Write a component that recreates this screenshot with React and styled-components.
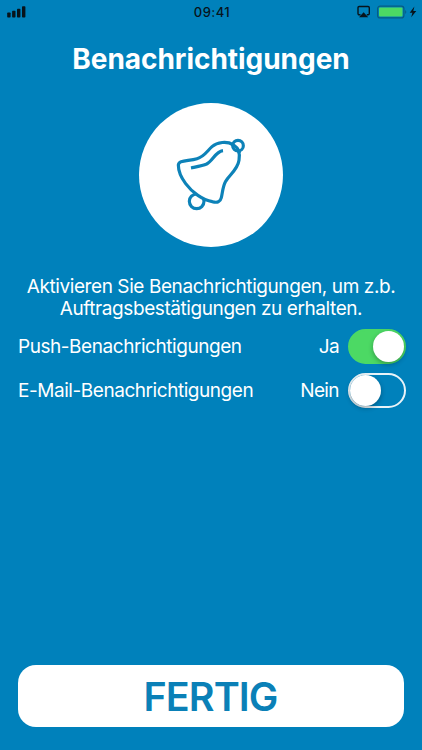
import React, { useState } from 'react';
import styled, { createGlobalStyle } from 'styled-components';

const GlobalStyle = createGlobalStyle`
    body {
        margin: 0;
        background: #0081bb;
        font-family: Inter, "Liberation Sans", sans-serif;
    }

    * {
        box-sizing: border-box;
    }
`

const StyledScreen = styled.div`
    display: flex;
    flex-direction: column;
    width: 100%;
    height: 100vh;
    min-height: 750px;
    padding-bottom: 23px;
    background: #0081bb;
    color: white;
`

const StatusBar = styled.header`
    display: grid;
    grid-template-columns: 1fr auto 1fr;
    align-items: center;
    height: 24px;
    padding: 0 5px 0 7px;
    color: #07141c;

    svg {
        display: block;
    }
`

const Time = styled.span`
    font-size: 13px;
    font-weight: 500;
    line-height: 24px;
    letter-spacing: 0.45px;
`

const StatusRight = styled.div`
    display: flex;
    justify-content: flex-end;
`

const Title = styled.h1`
    margin: 18px 0 0;
    font-size: 28px;
    font-weight: 700;
    line-height: 34px;
    letter-spacing: -0.04px;
    text-align: center;
`

const BellCircle = styled.div`
    display: flex;
    align-items: center;
    justify-content: center;
    align-self: center;
    width: 144px;
    height: 144px;
    margin-top: 27px;
    border-radius: 50%;
    background: white;
`

const Description = styled.p`
    margin: 29px 0 4px;
    padding: 0 20px;
    font-size: 19px;
    line-height: 22px;
    letter-spacing: -0.42px;
    text-align: center;
`

const Row = styled.div`
    display: flex;
    align-items: center;
    height: 44px;
    padding: 0 16px 0 18px;
    font-size: 19px;
    line-height: 24px;
    letter-spacing: -0.45px;
`

const Label = styled.span`
    flex: 1;
    padding-top: 2px;
`

const Value = styled.span`
    padding-top: 2px;
    letter-spacing: -0.6px;
`

const Switch = styled.button`
    display: flex;
    align-items: center;
    justify-content: ${props => props.$on ? 'flex-end' : 'flex-start'};
    width: 58px;
    height: 35px;
    margin-left: 9px;
    padding: 0;
    border: 2px solid ${props => props.$on ? '#4cd964' : '#e9f3f8'};
    border-radius: 18px;
    background: ${props => props.$on ? '#4cd964' : 'transparent'};
`

const Knob = styled.span`
    width: 31px;
    height: 31px;
    border-radius: 50%;
    background: white;
    box-shadow: 0 2px 5px rgba(0, 0, 0, 0.3);
`

const DoneButton = styled.button`
    height: 62px;
    margin: auto 18px 0;
    padding: 1px 1px 0 0;
    border: none;
    border-radius: 18px;
    background: white;
    color: #0a80b7;
    font-family: inherit;
    font-size: 39.5px;
    font-weight: 600;
    line-height: 62px;
    letter-spacing: -0.9px;
`

function Signal() {
    return (
        <svg width="20" height="12" viewBox="0 0 20 12" fill="currentColor">
            <rect x="0.2" y="6.5" width="3.4" height="5" rx="0.8" />
            <rect x="5.1" y="4.7" width="3.4" height="6.8" rx="0.8" />
            <rect x="10" y="2.7" width="3.4" height="8.8" rx="0.8" />
            <rect x="15" y="0.3" width="3.4" height="11.2" rx="0.8" />
        </svg>
    )
}

function DeviceStatus() {
    return (
        <svg width="60" height="14" viewBox="0 0 60 14">
            <path d="M3.5 9.8H2.3Q1 9.8 1 8.5V2.8Q1 1.5 2.3 1.5H11Q12.3 1.5 12.3 2.8V8.5Q12.3 9.8 11 9.8H9.8" fill="none" stroke="currentColor" strokeWidth="1.4" />
            <path d="M6.6 7.2L11.2 12.2H2Z" fill="currentColor" />
            <rect x="20.6" y="1.1" width="26.3" height="11.8" rx="2.5" fill="none" stroke="#075c83" strokeWidth="1.2" />
            <rect x="22" y="2.5" width="23.5" height="9" rx="1" fill="#4cd964" />
            <path d="M48.2 5Q50.4 7 48.2 9Z" fill="#075c83" />
            <path d="M57.4 1.4L52.7 7.7H55.4L54.2 12.3L59.3 6H56.3Z" fill="currentColor" />
        </svg>
    )
}

function Bell() {
    return (
        <svg width="80" height="90" viewBox="3 0 240 270" fill="none" stroke="#0d82b8" strokeWidth="9.5" strokeLinejoin="round">
            <circle cx="80" cy="214" r="22" />
            <path d="M33 95C47 91 65 91 81 86C103 80 112 62 126 50C142 36 171 33 189 44C204 53 211 70 207 91C203 119 179 134 167 154C158 170 158 187 154 203C151 216 142 219 127 215C98 210 67 188 47 161C33 142 25 122 25 105Q26 97 33 95Z" fill="white" />
            <path d="M63 114C82 110 99 107 110 102C128 93 136 65 159 62" />
            <circle cx="204" cy="47" r="16" fill="white" />
            <path d="M184 42C198 48 206 57 208 70" />
        </svg>
    )
}

function Option({ label, initial }) {
    const [on, setOn] = useState(initial);

    return (
        <Row>
            <Label>{label}</Label>
            <Value>{on ? 'Ja' : 'Nein'}</Value>
            <Switch $on={on} role="switch" aria-checked={on} aria-label={label} onClick={() => setOn(!on)}>
                <Knob />
            </Switch>
        </Row>
    )
}

export default function App() {
    return (
        <StyledScreen>
            <GlobalStyle />
            <StatusBar>
                <Signal />
                <Time>09:41</Time>
                <StatusRight>
                    <DeviceStatus />
                </StatusRight>
            </StatusBar>
            <Title>Benachrichtigungen</Title>
            <BellCircle>
                <Bell />
            </BellCircle>
            <Description>
                Aktivieren Sie Benachrichtigungen, um z.b. Auftragsbestätigungen zu erhalten.
            </Description>
            <Option label="Push-Benachrichtigungen" initial={true} />
            <Option label="E-Mail-Benachrichtigungen" initial={false} />
            <DoneButton>FERTIG</DoneButton>
        </StyledScreen>
    )
}
